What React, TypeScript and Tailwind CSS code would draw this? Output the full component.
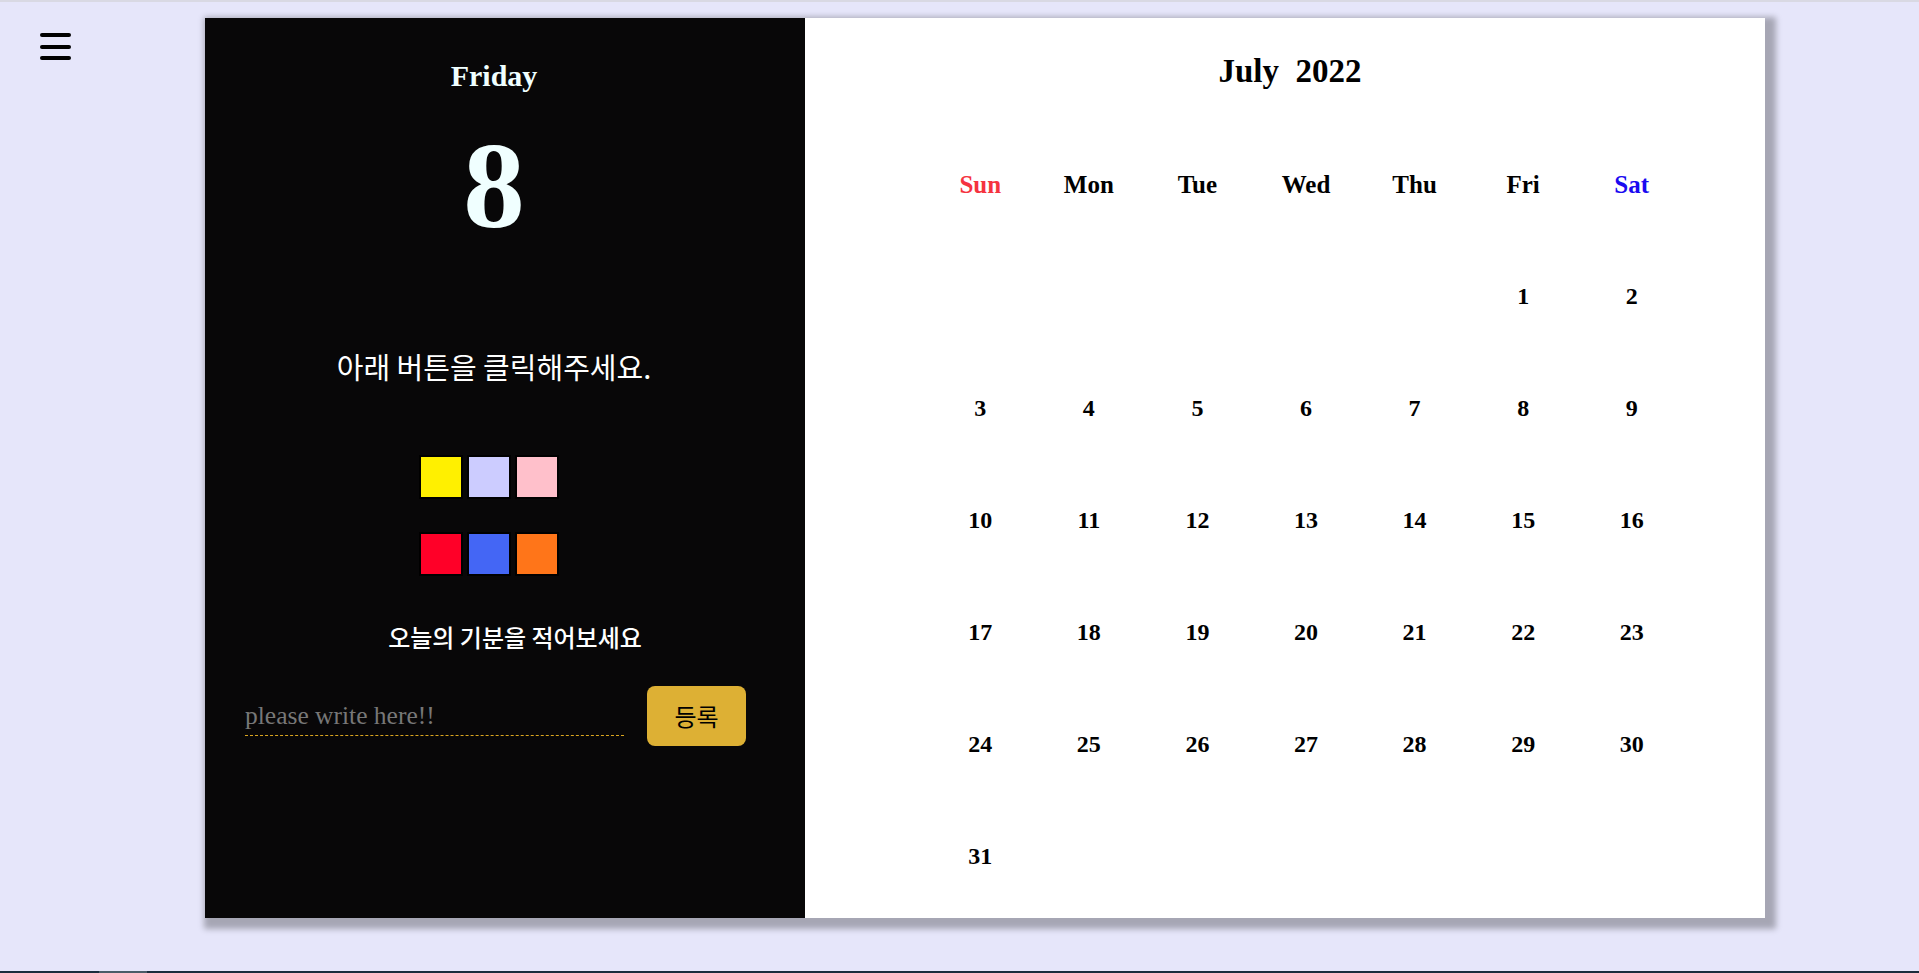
import React from 'react'

const serif = { fontFamily: '"Liberation Serif", "Times New Roman", serif' }
const korean = { fontFamily: '"Noto Sans CJK KR", "Noto Sans", sans-serif' }

const days = ['Sun', 'Mon', 'Tue', 'Wed', 'Thu', 'Fri', 'Sat']

const topColors = ['bg-[#fff000]', 'bg-[#ccccff]', 'bg-[#ffc0cb]']
const bottomColors = ['bg-[#ff0028]', 'bg-[#4466f5]', 'bg-[#ff7519]']

function Swatch({ color }: { color: string }) {
  return <button className={`h-[44px] w-[44px] border-2 border-black ${color}`} />
}

function DiaryPanel() {
  return (
    <div className="flex w-[600px] shrink-0 flex-col items-center bg-[#080708] pt-[43px]">
      <h2 className="mr-[22px] text-[30px] font-bold leading-none text-[#f0ffff]" style={serif}>
        Friday
      </h2>
      <div className="mr-[22px] mt-[33px] text-[123px] font-bold leading-none text-[#f0ffff]" style={serif}>
        8
      </div>
      <p className="mr-[22px] mt-[105px] text-[29px] leading-none text-white" style={korean}>
        아래 버튼을 클릭해주세요.
      </p>

      <div className="mr-[32px] mt-[74px] flex flex-col gap-[33px]">
        <div className="flex gap-[4px]">
          {topColors.map((c) => (
            <Swatch key={c} color={c} />
          ))}
        </div>
        <div className="flex gap-[4px]">
          {bottomColors.map((c) => (
            <Swatch key={c} color={c} />
          ))}
        </div>
      </div>

      <p className="ml-[20px] mt-[49px] text-[24px] font-medium leading-none text-white" style={korean}>
        오늘의 기분을 적어보세요
      </p>

      <div className="mt-[37px] flex items-end self-stretch pl-[40px]">
        <input
          className="mb-[10px] h-[40px] w-[379px] border-b border-dashed border-[#daa520] bg-transparent text-[25.5px] text-white outline-none placeholder:text-[#777777]"
          style={serif}
          placeholder="please write here!!"
        />
        <button
          className="ml-[23px] h-[60px] w-[99px] rounded-[8px] bg-[#ddb034] text-[24px] text-black"
          style={korean}
        >
          등록
        </button>
      </div>
    </div>
  )
}

function CalendarPanel() {
  const cells: (number | null)[] = [
    ...Array(5).fill(null),
    ...Array.from({ length: 31 }, (_, i) => i + 1),
  ]
  return (
    <div className="flex flex-1 flex-col bg-white pt-[37px]">
      <h1
        className="ml-[10px] whitespace-pre text-center text-[33px] font-bold leading-none text-black"
        style={serif}
      >
        {'July  2022'}
      </h1>
      <div className="ml-[121px] mt-[40px] grid w-[760px] grid-cols-7 auto-rows-[112px]" style={serif}>
        {days.map((d, i) => (
          <div
            key={d}
            className={`flex items-center justify-center text-[25px] font-bold leading-none ${
              i === 0 ? 'text-[#f5333f]' : i === 6 ? 'text-[#1a0af0]' : 'text-black'
            }`}
          >
            {d}
          </div>
        ))}
        {cells.map((n, i) => (
          <div key={i} className="flex items-center justify-center text-[24px] font-bold leading-none text-black">
            {n ?? ''}
          </div>
        ))}
      </div>
    </div>
  )
}

export default function App() {
  return (
    <div className="flex h-[973px] flex-col overflow-hidden border-t-2 border-[#d9d9e3] bg-[#e6e6fa]">
      <div className="flex flex-1">
        <div className="w-[205px] shrink-0 pl-[40px] pt-[31px]">
          <button className="flex flex-col gap-[7.5px]" aria-label="menu">
            <span className="block h-[4px] w-[31px] rounded-full bg-black" />
            <span className="block h-[4px] w-[31px] rounded-full bg-black" />
            <span className="block h-[4px] w-[31px] rounded-full bg-black" />
          </button>
        </div>
        <div className="mt-[16px] flex h-[900px] w-[1560px] shrink-0 shadow-[5px_5px_6px_6px_rgba(0,0,0,0.28)]">
          <DiaryPanel />
          <CalendarPanel />
        </div>
      </div>
      <div className="flex h-[2px] shrink-0 bg-[#1b2d3d]">
        <div className="ml-[99px] w-[48px] bg-[#4b5c68]" />
      </div>
    </div>
  )
}
